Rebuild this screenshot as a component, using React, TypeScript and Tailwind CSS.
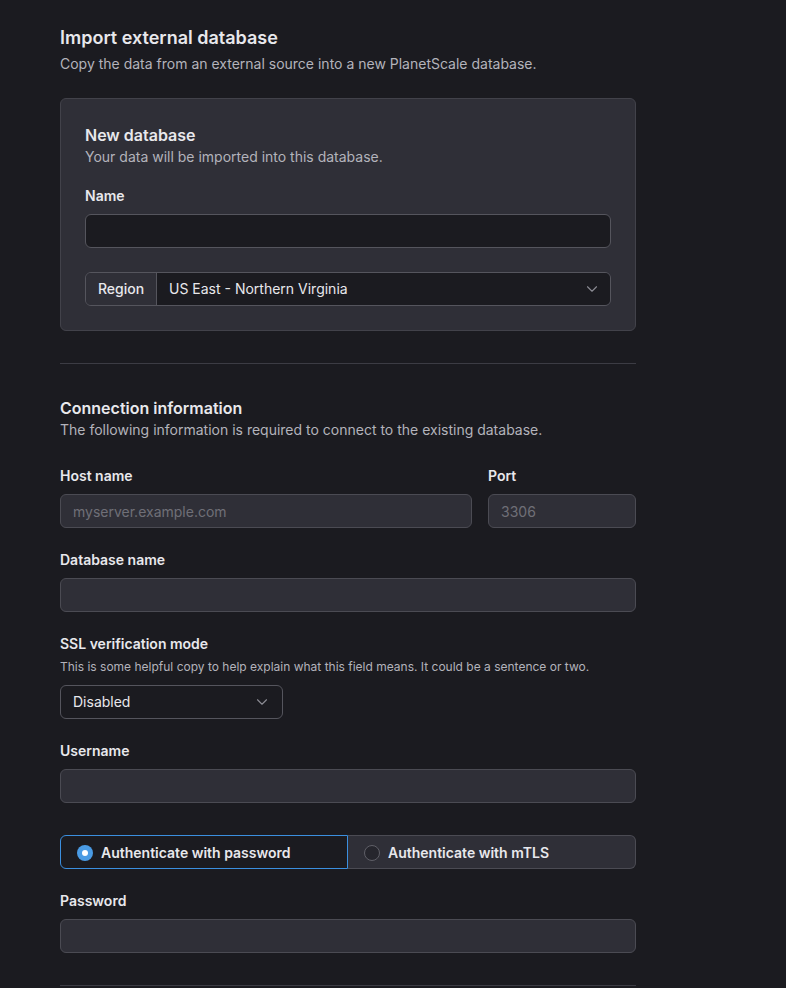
import { ChevronDown } from "lucide-react";

function Label({ children }: { children: React.ReactNode }) {
  return <label className="mb-2 block pt-px text-sm font-semibold leading-5 text-[#e8e8ec]">{children}</label>;
}

function TextInput({ placeholder }: { placeholder?: string }) {
  return (
    <input
      placeholder={placeholder}
      className="block h-[34px] w-full rounded-md border border-[#4b4b53] bg-[#2f2f37] px-3 text-sm text-[#e8e8ec] placeholder:text-[#6f6f77] outline-none"
    />
  );
}

export default function App() {
  return (
    <div className="min-h-[988px] bg-[#1b1b20] px-[60px] pt-6 pb-10 text-[#e8e8ec]" style={{ fontFamily: "Inter, 'Noto Sans', sans-serif" }}>
      <div className="w-[576px]">
        <h1 className="text-lg font-semibold leading-7">Import external database</h1>
        <p className="mt-0.5 text-sm leading-5 text-[#b3b3bb]">
          Copy the data from an external source into a new PlanetScale database.
        </p>

        <div className="mt-6 rounded-md border border-[#42424a] bg-[#2f2f37] p-6">
          <h2 className="text-base font-semibold leading-6">New database</h2>
          <p className="text-sm leading-5 text-[#b3b3bb]">Your data will be imported into this database.</p>

          <div className="mt-[18px]">
            <Label>Name</Label>
            <input className="block h-[34px] w-full rounded-md border border-[#55555d] bg-[#1b1b20] px-3 text-sm outline-none" />
          </div>

          <div className="mt-6 flex h-[34px] overflow-hidden rounded-md border border-[#55555d]">
            <div className="flex w-[71px] shrink-0 items-center justify-center border-r border-[#55555d] bg-[#2f2f37] text-sm font-medium">
              Region
            </div>
            <div className="flex flex-1 items-center justify-between bg-[#1b1b20] pl-3 pr-[9px] text-sm">
              <span>US East - Northern Virginia</span>
              <ChevronDown size={18} strokeWidth={1.5} className="text-[#8b8b93]" />
            </div>
          </div>
        </div>

        <hr className="mt-8 border-t border-[#3c3c44]" />

        <h2 className="mt-8 text-base font-semibold leading-6">Connection information</h2>
        <p className="text-sm leading-5 text-[#b3b3bb]">
          The following information is required to connect to the existing database.
        </p>

        <div className="mt-[25px] flex gap-4">
          <div className="flex-1">
            <Label>Host name</Label>
            <TextInput placeholder="myserver.example.com" />
          </div>
          <div className="w-[148px]">
            <Label>Port</Label>
            <TextInput placeholder="3306" />
          </div>
        </div>

        <div className="mt-[21px]">
          <Label>Database name</Label>
          <TextInput />
        </div>

        <div className="mt-[21px]">
          <label className="block pt-px text-sm font-semibold leading-5">SSL verification mode</label>
          <p className="mt-[5px] text-xs leading-4 text-[#b3b3bb]">
            This is some helpful copy to help explain what this field means. It could be a sentence or two.
          </p>
          <div className="mt-2.5 flex h-[34px] w-[223px] items-center justify-between rounded-md border border-[#55555d] bg-[#1b1b20] pl-3 pr-[11px] text-sm">
            <span>Disabled</span>
            <ChevronDown size={18} strokeWidth={1.5} className="text-[#8b8b93]" />
          </div>
        </div>

        <div className="mt-[21px]">
          <Label>Username</Label>
          <TextInput />
        </div>

        <div className="mt-8 flex h-[34px] rounded-md">
          <div className="flex w-[288px] items-center gap-2 rounded-l-md border border-[#3b8fdf] bg-[#1b1b20] pl-4 pt-px text-sm font-semibold">
            <span className="flex h-4 w-4 items-center justify-center rounded-full bg-[#4a9be4]">
              <span className="h-1.5 w-1.5 rounded-full bg-white" />
            </span>
            Authenticate with password
          </div>
          <div className="flex flex-1 items-center gap-2 rounded-r-md border border-l-0 border-[#4b4b53] bg-[#2f2f37] pl-4 pt-px text-sm font-semibold">
            <span className="h-4 w-4 rounded-full border border-[#5f5f67] bg-[#26262d]" />
            Authenticate with mTLS
          </div>
        </div>

        <div className="mt-[21px]">
          <Label>Password</Label>
          <TextInput />
        </div>

        <hr className="mt-8 border-t border-[#3c3c44]" />
      </div>
    </div>
  );
}
